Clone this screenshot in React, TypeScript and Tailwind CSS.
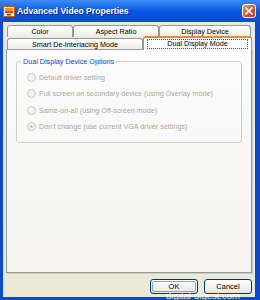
import React from 'react';

const font = { fontFamily: '"Liberation Sans", Arial, sans-serif' };

function Tab({ label, width, selected }: { label: string; width: string; selected?: boolean }) {
  if (selected) {
    return (
      <div
        className={`${width} relative z-10 -mt-[1px] h-[14px] rounded-t-[3px] border-x border-t-2 border-x-[#919b9c] border-t-[#e68b2c] bg-[#fcfcfe] px-[3px] pt-[1px]`}
      >
        <div className="flex h-[10px] items-center justify-center border border-dotted border-[#555] text-[7.2px] leading-none text-black">
          {label}
        </div>
      </div>
    );
  }
  return (
    <div
      className={`${width} flex h-[12px] items-center justify-center rounded-t-[3px] border border-b-0 border-[#919b9c] bg-gradient-to-b from-white to-[#ecebe5] text-[7.2px] leading-none text-black`}
    >
      {label}
    </div>
  );
}

function Radio({ label, checked }: { label: string; checked?: boolean }) {
  return (
    <div className="flex h-[16.5px] items-center gap-[3px]">
      <span className="flex h-[9px] w-[9px] items-center justify-center rounded-full border border-[#cac8bb] bg-[#f5f4ea]">
        {checked && <span className="h-[3px] w-[3px] rounded-full bg-[#cac8bb]" />}
      </span>
      <span className="text-[7.2px] leading-none text-[#aca899]">{label}</span>
    </div>
  );
}

function XpButton({ label, isDefault }: { label: string; isDefault?: boolean }) {
  return (
    <div className="h-[15px] w-[48px] rounded-[3px] border border-[#003c74] bg-gradient-to-b from-white to-[#e6e5dc] p-[1px]">
      <div
        className={`flex h-full items-center justify-center rounded-[2px] ${
          isDefault ? 'border border-[#7ea3e8]' : ''
        }`}
      >
        <span className="text-[7.5px] leading-none text-black">{label}</span>
      </div>
    </div>
  );
}

export default function App() {
  return (
    <div style={font} className="relative flex h-[300px] w-[260px] flex-col overflow-hidden bg-[#0a46d8]">
      {/* Title bar */}
      <div className="flex h-[22px] shrink-0 items-center bg-gradient-to-b from-[#3d8bf3] via-[#0658e6] to-[#0a4ad0] pl-[3px] pr-[4px]">
        <svg width="12" height="11" viewBox="0 0 12 11" className="shrink-0">
          <rect x="0.5" y="0.5" width="11" height="10" fill="#fde9c4" stroke="#c45a12" />
          <rect x="2" y="2" width="8" height="5" fill="#f39a22" />
          <rect x="2" y="5" width="8" height="2" fill="#e2431d" />
          <rect x="4" y="8" width="4" height="1.5" fill="#8a4a18" />
        </svg>
        <span className="ml-[2px] text-[8.6px] font-bold text-white [text-shadow:1px_1px_0_#0a2a8a]">
          Advanced Video Properties
        </span>
        <div className="ml-auto flex h-[14px] w-[14px] items-center justify-center rounded-[3px] border border-white bg-gradient-to-br from-[#ee9a7a] via-[#d9552c] to-[#c0391a]">
          <svg width="8" height="8" viewBox="0 0 8 8">
            <path d="M1 1 L7 7 M7 1 L1 7" stroke="white" strokeWidth="1.6" strokeLinecap="square" />
          </svg>
        </div>
      </div>

      {/* Body */}
      <div className="mb-[3px] ml-[3px] mr-[5px] flex flex-1 flex-col bg-[#ece9d8] px-[3px] pt-[3px]">
        {/* Tabs */}
        <div className="ml-[1px] flex flex-col">
          <div className="flex">
            <Tab label="Color" width="w-[66px]" />
            <Tab label="Aspect Ratio" width="w-[86px]" />
            <Tab label="Display Device" width="w-[92px]" />
          </div>
          <div className="flex items-end">
            <Tab label="Smart De-Interlacing Mode" width="w-[136px]" />
            <Tab label="Dual Display Mode" width="w-[109px]" selected />
          </div>
        </div>

        {/* Panel */}
        <div className="-mt-[1px] h-[224px] border border-[#919b9c] bg-gradient-to-b from-[#fcfcfe] to-[#f4f3ee] px-[9px] pt-[8px] shadow-[1px_1px_0_#d0cec1]">
          <fieldset className="h-[85px] rounded-[3px] border border-[#d0d0bf] pl-[10px]">
            <legend className="-ml-[6px] px-[2px] text-[7.2px] leading-none text-[#0046d5]">
              Dual Display Device Options
            </legend>
            <div className="mt-[4px] flex flex-col">
              <Radio label="Default driver setting" />
              <Radio label="Full screen on secondary device (using Overlay mode)" />
              <Radio label="Same-on-all (using Off-screen mode)" />
              <Radio label="Don't change (use current VGA driver settings)" checked />
            </div>
          </fieldset>
        </div>

        {/* Buttons */}
        <div className="mt-[6px] flex justify-end gap-[6px]">
          <XpButton label="OK" isDefault />
          <XpButton label="Cancel" />
        </div>
      </div>

      {/* watermark */}
      <span className="absolute left-[166px] top-[291px] text-[9.5px] leading-none text-white/90">
        digital-digest.com
      </span>
    </div>
  );
}
